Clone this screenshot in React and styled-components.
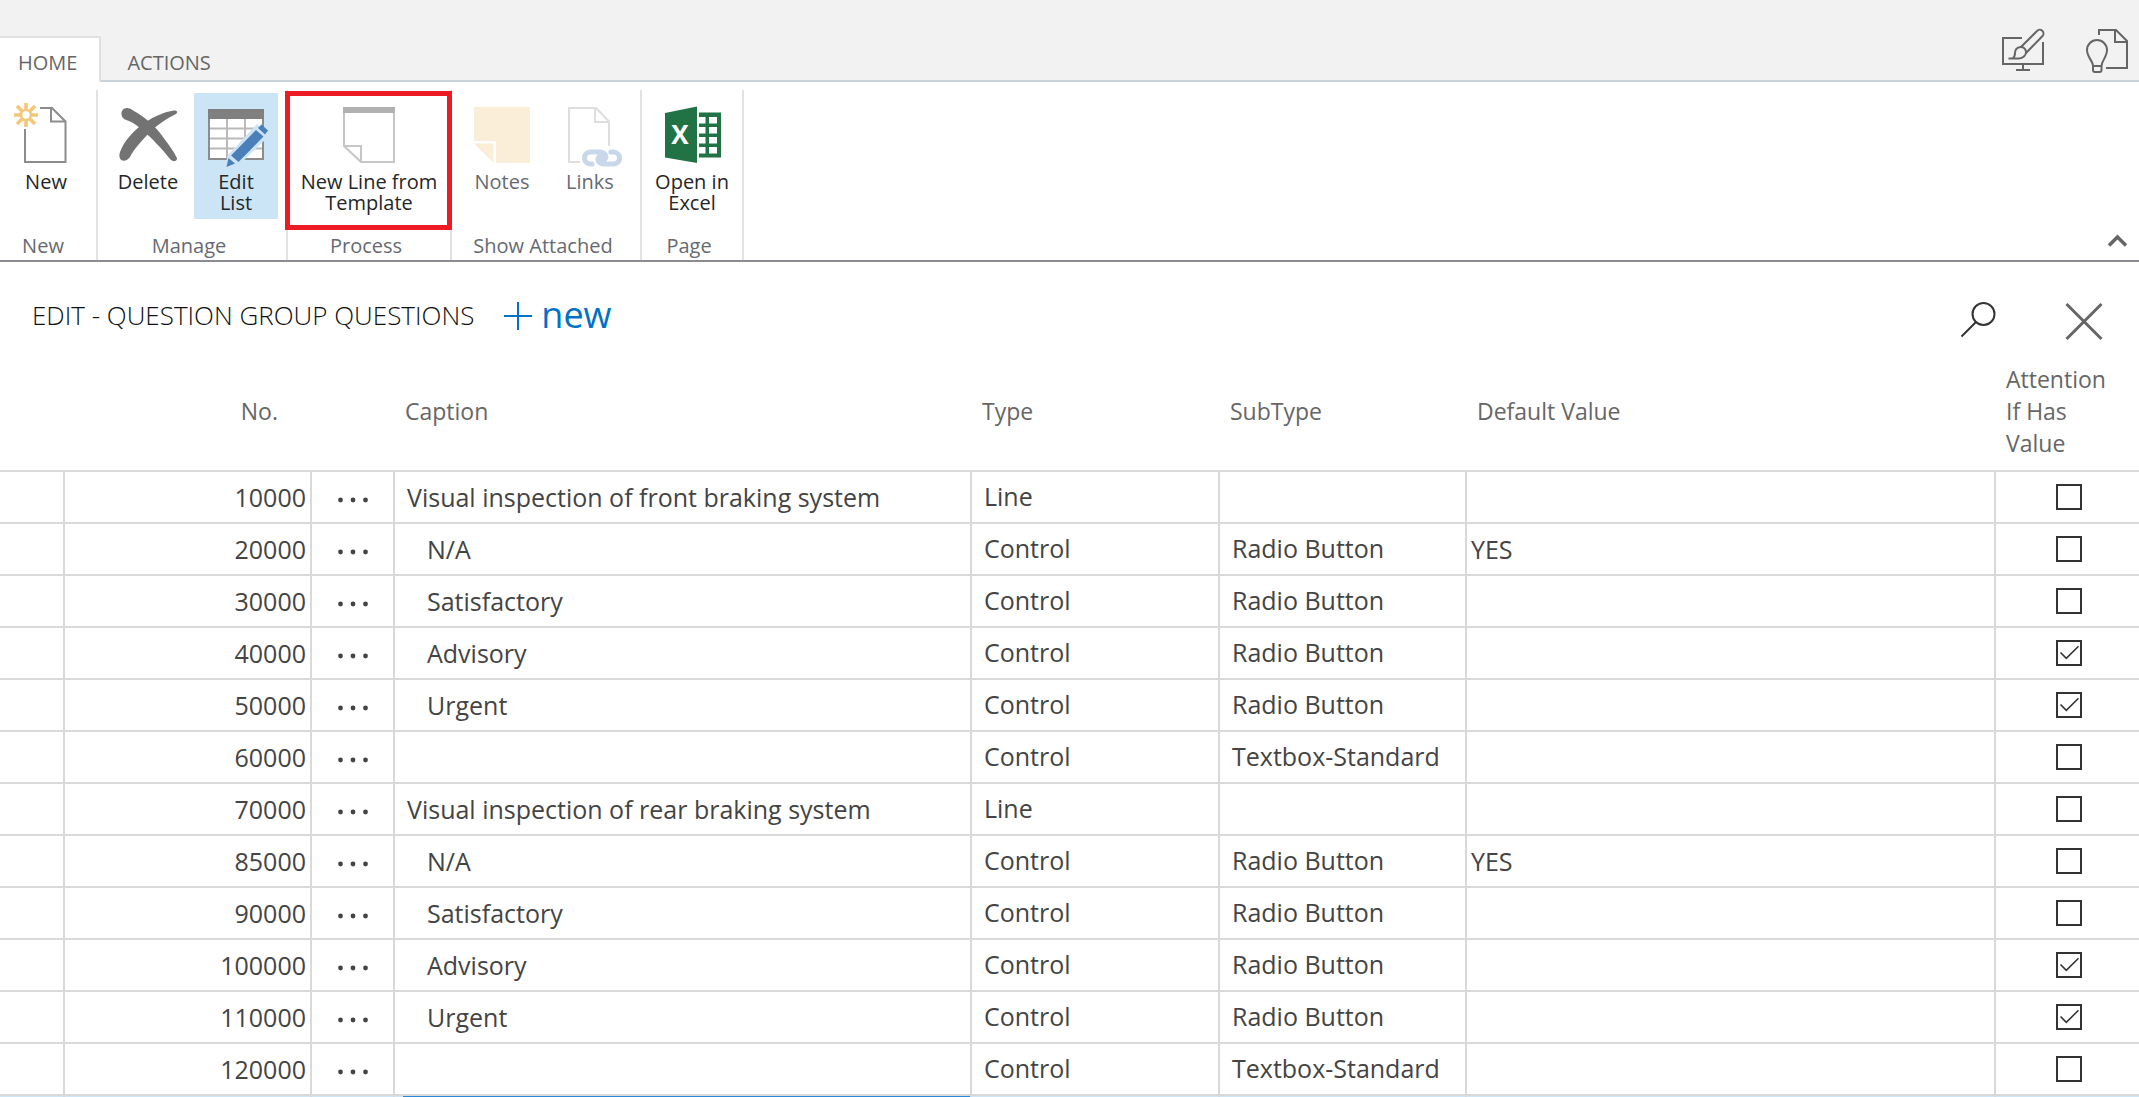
import React, { useState } from 'react';
import styled, { createGlobalStyle, css } from 'styled-components';

const GlobalStyle = createGlobalStyle`
  *, *::before, *::after { box-sizing: border-box; }
  body {
    margin: 0;
    background: #fff;
    color: #444;
    font-family: "Open Sans", "Noto Sans", "Liberation Sans", sans-serif;
  }
  button {
    margin: 0;
    padding: 0;
    border: 0;
    background: none;
    color: inherit;
    font: inherit;
    cursor: pointer;
  }
  svg { display: block; }
`;

const Page = styled.div`
  height: 100vh;
  overflow: hidden;
`;

/* ---------- top bar ---------- */

const TopBar = styled.header`
  display: flex;
  align-items: flex-end;
  height: 82px;
  background: #f2f2f2;
  border-bottom: 2px solid #c9d3dc;
`;

const Tab = styled.button`
  position: relative;
  padding: 13px 22px 7px 18px;
  margin-bottom: -2px;
  border: solid transparent;
  border-width: 2px 2px 0 0;
  font-size: 20px;
  line-height: 24px;
  color: #666;
  ${(p) => p.$active && css`
    background: #fff;
    border-color: #e1e1e1;
  `}
  & + & { padding-left: 26px; }
`;

const TopActions = styled.div`
  display: flex;
  gap: 36px;
  margin-left: auto;
  padding: 0 7px 4px 0;
`;

/* ---------- ribbon ---------- */

const Ribbon = styled.section`
  display: flex;
  padding-top: 8px;
  border-bottom: 2px solid #8a8c91;
`;

const Group = styled.div`
  position: relative;
  display: flex;
  flex-direction: column;
  justify-content: space-between;
  height: 170px;
  padding: 3px 8px 2px;
  border-right: 2px solid #e2e2e2;
  &:first-child { padding-left: 4px; }
`;

const GroupButtons = styled.div`
  display: flex;
  gap: 4px;
`;

const GroupLabel = styled.div`
  padding-right: 6px;
  font-size: 20px;
  line-height: 24px;
  text-align: center;
  color: #666a70;
`;

const RibbonButton = styled.button`
  display: flex;
  flex-direction: column;
  align-items: center;
  width: ${(p) => (p.$wide ? 146 : 84)}px;
  height: 126px;
  padding-top: 10px;
  font-size: 20px;
  line-height: 21px;
  white-space: pre-line;
  color: #262626;
  background: ${(p) => (p.$active ? '#cce5f6' : 'transparent')};
  &:disabled { color: #666a70; cursor: default; }
  svg { margin-bottom: 4px; }
`;

const Highlight = styled.div`
  position: absolute;
  top: 1px;
  left: -3px;
  right: -2px;
  height: 139px;
  border: 5px solid #ed1c24;
  pointer-events: none;
`;

const CollapseButton = styled.button`
  align-self: flex-end;
  margin-left: auto;
  padding: 0 12px 13px 0;
`;

/* ---------- page heading ---------- */

const TitleBar = styled.div`
  display: flex;
  align-items: center;
  padding: 27px 29px 22px 32px;
`;

const Title = styled.h1`
  margin: 0 27px 0 0;
  font-size: 26px;
  font-weight: 300;
  line-height: 40px;
  color: #111;
`;

const NewButton = styled.button`
  display: flex;
  align-items: center;
  gap: 8px;
  font-size: 36px;
  line-height: 40px;
  color: #0072c6;
`;

const TitleActions = styled.div`
  display: flex;
  gap: 53px;
  margin-left: auto;
`;

/* ---------- grid ---------- */

const Grid = styled.table`
  width: 100%;
  table-layout: fixed;
  border-collapse: separate;
  border-spacing: 0;
`;

const Col = styled.col`
  width: ${(p) => (p.$width ? `${p.$width}px` : 'auto')};
`;

const HeadCell = styled.th`
  padding: 0 ${(p) => (p.$numeric ? 34 : 30)}px 11px 10px;
  border-bottom: 2px solid #d9d9d9;
  font-size: 23px;
  font-weight: 400;
  line-height: 32px;
  text-align: ${(p) => (p.$numeric ? 'right' : 'left')};
  color: #666;
`;

const Row = styled.tr`
  height: 52px;
  background: ${(p) => (p.$selected ? '#cfe6f5' : '#fff')};
`;

const Cell = styled.td`
  padding: 0 4px 0 ${(p) => p.$pad || 0}px;
  border: solid #d9d9d9;
  border-width: 0 2px 2px 0;
  font-size: 25px;
  line-height: 36px;
  white-space: nowrap;
  text-align: ${(p) => p.$align || 'left'};
  &:last-child { border-right: 0; }
`;

const OptionCell = styled(Cell)`
  padding: 0 4px 2px 12px;
`;

const RowMenu = styled.button`
  display: block;
  width: 100%;
  svg { margin: 0 auto; }
`;

const CheckBox = styled.span`
  display: grid;
  width: 26px;
  margin: 0 auto;
  > * { grid-area: 1 / 1; }
  svg { pointer-events: none; z-index: 1; }
`;

const CheckInput = styled.input`
  appearance: none;
  width: 26px;
  height: 26px;
  margin: 0;
  border: 2px solid #333;
  background: #fff;
`;

const EditorCell = styled(Cell)`
  padding: 0 0 0 8px;
`;

const CaptionInput = styled.input`
  display: block;
  width: 100%;
  height: 50px;
  padding: 0 4px;
  border: 2px solid #2b88d8;
  outline: 0;
  background: #fff;
  color: inherit;
  font: inherit;
`;

/* ---------- icons ---------- */

const Icon = ({ w = 64, h = 64, children, ...rest }) => (
  <svg width={w} height={h} viewBox={`0 0 ${w} ${h}`} fill="none" aria-hidden="true" {...rest}>
    {children}
  </svg>
);

const NewIcon = () => (
  <Icon>
    <g stroke="#8c8c8c" strokeWidth="2">
      <path d="M26 5H38L51.500 18.500V59H11V26" />
      <path d="M37 5V18.500H51.500" />
    </g>
    <g stroke="#f0c878" strokeWidth="3.600">
      <circle cx="12" cy="12" r="5" strokeWidth="2.600" />
      <path d="M12 0V6M12 18V24M0 12H6M18 12H24M3 3L7.800 7.800M16.200 16.200L21 21M21 3L16.200 7.800M7.800 16.200L3 21" />
    </g>
  </Icon>
);

const DeleteIcon = () => (
  <Icon fill="#737373">
    <path d="M6 8C8 4 13 4 18 8C27 13 37 21 44 30C50 38 57 47 61 55C61 58.500 57.500 59 55 57C46 46 36 35 26 27C20 21 14 18 9 16.500C5 14 5 10 6 8Z" />
    <path d="M4 49C8 38 18 27 29 19.500C39 13 48 9 58 7.500C62 7.500 62 10 59 11.500C46 18 35 27 27.500 36C21 43 17 48 14 54C10 60 1 59 4 49Z" />
  </Icon>
);

const EditListIcon = () => (
  <Icon>
    <rect x="5" y="7" width="54" height="49" fill="#fff" stroke="#8c8c8c" strokeWidth="2" />
    <path d="M6 25.500H58M6 35.500H58M6 45.500H58M23 16V55M41 16V55" stroke="#b9b9b9" strokeWidth="2" />
    <rect x="4" y="6" width="56" height="10" fill="#808080" />
    <path d="M20 66L24 52L53 21L66 32L36 61Z" fill="#cce5f6" />
    <path d="M57.500 21.500L64 27.500L61 31.500L54 25Z" fill="#4a7fb9" />
    <path d="M52 27L59.500 33.500L34.500 59L27 52.500Z" fill="#4a7fb9" />
    <path d="M24.500 55L31 60.500L22.500 64Z" fill="#4a7fb9" />
  </Icon>
);

const TemplateIcon = () => (
  <Icon>
    <path d="M7 5H57V59H24L7 43Z" stroke="#c6c6c6" strokeWidth="2" />
    <path d="M7 43H24V59" stroke="#c6c6c6" strokeWidth="2" />
    <rect x="6" y="4" width="52" height="6" fill="#b0b0b0" />
  </Icon>
);

const NotesIcon = () => (
  <Icon fill="#faeed8">
    <path d="M4 4H60V60H26V38H4Z" />
    <path d="M4 40.500H23.500V60Z" />
  </Icon>
);

const LinksIcon = () => (
  <Icon>
    <path d="M22 59H11V5H38L51 18.500V43" stroke="#dedede" strokeWidth="2" />
    <path d="M37 5V19H51" stroke="#dedede" strokeWidth="2" />
    <g stroke="#c8d8ea" strokeWidth="5.200" strokeLinecap="round">
      <path d="M34 61H32.500A6 6 0 0 1 32.500 49H42C46 49 48.500 52 47.500 55C46.500 57.500 44 58.500 41 57.500" />
      <path d="M53 49H55.500A6 6 0 0 1 55.500 61H46C41.500 61 39 58 40.500 55C41.500 52.500 44 51.500 47 52.500" />
    </g>
  </Icon>
);

const ExcelIcon = () => (
  <Icon>
    <path d="M5 10L37 3.500V60L5 54.500Z" fill="#217346" />
    <rect x="39" y="9.500" width="22" height="45" fill="#217346" />
    <path d="M39 14h6.500v6.500H39zM49 14h8v6.500h-8zM39 24h6.500v6.500H39zM49 24h8v6.500h-8zM39 34h6.500v6.500H39zM49 34h8v6.500h-8zM39 44h6.500v6.500H39zM49 44h8v6.500h-8z" fill="#fff" />
    <text x="20" y="41" textAnchor="middle" fontSize="26" fontWeight="700" fill="#fff">X</text>
  </Icon>
);

const DesignIcon = () => (
  <Icon w={48} h={50} stroke="#666" strokeWidth="2">
    <path d="M22 12H3V38H43V16M23 38V44M16 44H30" />
    <path d="M20.500 21.500L37 5A3.700 3.700 0 0 1 42.500 10L26 27" />
    <path d="M8.500 32.500H19C23 32.500 26.500 29 26 25.500C25.500 22.500 23 20.500 20.500 21C17 21.500 15 24 15 27C15 29.500 14 31.500 12.500 32.500" />
  </Icon>
);

const IdeaIcon = () => (
  <Icon w={48} h={50} stroke="#666" strokeWidth="2">
    <path d="M15 9V4H32L43 15V42H22" />
    <path d="M31 4V16H43" />
    <path d="M9 40C9 35 3 31 3 24A10 10 0 0 1 23 24C23 31 17.500 35 17.500 40V44Q17.500 46 15.500 46H11Q9 46 9 44ZM9 40H17.500" />
  </Icon>
);

const SearchIcon = () => (
  <Icon w={52} h={52} stroke="#333" strokeWidth="2">
    <circle cx="30.500" cy="25" r="11" />
    <path d="M23 33L8.500 47.500" />
  </Icon>
);

const CloseIcon = () => (
  <Icon w={52} h={52} stroke="#666" strokeWidth="3">
    <path d="M8.500 15L43.500 50M43.500 15L8.500 50" />
  </Icon>
);

const PlusIcon = () => (
  <Icon w={32} h={32} stroke="#0072c6" strokeWidth="2">
    <path d="M17 3V31M3 17H31" />
  </Icon>
);

const ChevronIcon = () => (
  <Icon w={20} h={14} stroke="#666" strokeWidth="3.600">
    <path d="M2 12.500L10.500 4L19 12.500" />
  </Icon>
);

const DotsIcon = () => (
  <Icon w={32} h={18} fill="#444">
    <circle cx="3.500" cy="12" r="2.400" />
    <circle cx="16" cy="12" r="2.400" />
    <circle cx="28.500" cy="12" r="2.400" />
  </Icon>
);

const TickIcon = () => (
  <Icon w={26} h={26} stroke="#333" strokeWidth="1.600">
    <path d="M4.500 12.500L10.300 18.300L22.500 6.300" />
  </Icon>
);

/* ---------- data ---------- */

const GROUPS = [
  { label: 'New', buttons: [{ text: 'New', icon: NewIcon }] },
  {
    label: 'Manage',
    buttons: [
      { text: 'Delete', icon: DeleteIcon },
      { text: 'Edit\nList', icon: EditListIcon, active: true },
    ],
  },
  {
    label: 'Process',
    highlighted: true,
    buttons: [{ text: 'New Line from\nTemplate', icon: TemplateIcon, wide: true }],
  },
  {
    label: 'Show Attached',
    buttons: [
      { text: 'Notes', icon: NotesIcon, disabled: true },
      { text: 'Links', icon: LinksIcon, disabled: true },
    ],
  },
  { label: 'Page', buttons: [{ text: 'Open in\nExcel', icon: ExcelIcon }] },
];

const COLUMN_WIDTHS = [65, 247, 83, 577, 248, 247, null, 143];

const ROWS = [
  { no: 10000, caption: 'Visual inspection of front braking system', type: 'Line' },
  { no: 20000, caption: 'N/A', type: 'Control', sub: 'Radio Button', value: 'YES' },
  { no: 30000, caption: 'Satisfactory', type: 'Control', sub: 'Radio Button' },
  { no: 40000, caption: 'Advisory', type: 'Control', sub: 'Radio Button', attention: true },
  { no: 50000, caption: 'Urgent', type: 'Control', sub: 'Radio Button', attention: true },
  { no: 60000, caption: '', type: 'Control', sub: 'Textbox-Standard' },
  { no: 70000, caption: 'Visual inspection of rear braking system', type: 'Line' },
  { no: 85000, caption: 'N/A', type: 'Control', sub: 'Radio Button', value: 'YES' },
  { no: 90000, caption: 'Satisfactory', type: 'Control', sub: 'Radio Button' },
  { no: 100000, caption: 'Advisory', type: 'Control', sub: 'Radio Button', attention: true },
  { no: 110000, caption: 'Urgent', type: 'Control', sub: 'Radio Button', attention: true },
  { no: 120000, caption: '', type: 'Control', sub: 'Textbox-Standard' },
];

function AttentionBox({ initial, label }) {
  const [checked, setChecked] = useState(Boolean(initial));
  return (
    <CheckBox>
      <CheckInput
        type="checkbox"
        aria-label={label}
        checked={checked}
        onChange={(e) => setChecked(e.target.checked)}
      />
      {checked && <TickIcon />}
    </CheckBox>
  );
}

function QuestionRow({ row }) {
  return (
    <Row>
      <Cell />
      <Cell $align="right">{row.no}</Cell>
      <Cell $pad={4}>
        <RowMenu aria-label={`Options for line ${row.no}`}><DotsIcon /></RowMenu>
      </Cell>
      <Cell $pad={row.type === 'Line' ? 12 : 32}>{row.caption}</Cell>
      <OptionCell>{row.type}</OptionCell>
      <OptionCell>{row.sub}</OptionCell>
      <Cell $pad={4}>{row.value}</Cell>
      <Cell $pad={6}>
        <AttentionBox initial={row.attention} label={`Attention if has value, line ${row.no}`} />
      </Cell>
    </Row>
  );
}

export default function App() {
  return (
    <Page>
      <GlobalStyle />
      <TopBar>
        <Tab $active>HOME</Tab>
        <Tab>ACTIONS</Tab>
        <TopActions>
          <button aria-label="Personalize"><DesignIcon /></button>
          <button aria-label="Page tips"><IdeaIcon /></button>
        </TopActions>
      </TopBar>

      <Ribbon>
        {GROUPS.map((group) => (
          <Group key={group.label}>
            <GroupButtons>
              {group.buttons.map(({ text, icon: Glyph, active, wide, disabled }) => (
                <RibbonButton key={text} $active={active} $wide={wide} disabled={disabled}>
                  <Glyph />
                  {text}
                </RibbonButton>
              ))}
            </GroupButtons>
            <GroupLabel>{group.label}</GroupLabel>
            {group.highlighted && <Highlight />}
          </Group>
        ))}
        <CollapseButton aria-label="Collapse ribbon"><ChevronIcon /></CollapseButton>
      </Ribbon>

      <TitleBar>
        <Title>EDIT - QUESTION GROUP QUESTIONS</Title>
        <NewButton><PlusIcon />new</NewButton>
        <TitleActions>
          <button aria-label="Search"><SearchIcon /></button>
          <button aria-label="Close"><CloseIcon /></button>
        </TitleActions>
      </TitleBar>

      <Grid>
        <colgroup>
          {COLUMN_WIDTHS.map((width, i) => <Col key={i} $width={width} />)}
        </colgroup>
        <thead>
          <tr>
            <HeadCell />
            <HeadCell $numeric>No.</HeadCell>
            <HeadCell />
            <HeadCell>Caption</HeadCell>
            <HeadCell>Type</HeadCell>
            <HeadCell>SubType</HeadCell>
            <HeadCell>Default Value</HeadCell>
            <HeadCell>Attention If Has Value</HeadCell>
          </tr>
        </thead>
        <tbody>
          {ROWS.map((row) => <QuestionRow key={row.no} row={row} />)}
          <Row $selected>
            <Cell />
            <Cell />
            <Cell />
            <EditorCell><CaptionInput aria-label="Caption" /></EditorCell>
            <Cell />
            <Cell />
            <Cell />
            <Cell />
          </Row>
        </tbody>
      </Grid>
    </Page>
  );
}
